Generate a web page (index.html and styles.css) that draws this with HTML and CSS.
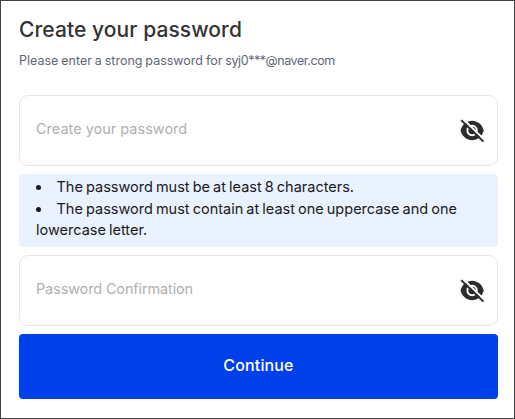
FILE: index.html
```html
<!DOCTYPE html>
<html lang="en">

<head>
    <meta charset="UTF-8">
    <meta name="viewport" content="width=device-width, initial-scale=1.0">
    <title>Create your password</title>
    <link rel="stylesheet" href="styles.css">
</head>

<body>
    <form class="password-form">
        <h1 class="title">Create your password</h1>
        <p class="subtitle">Please enter a strong password for <span class="email">syj0***@naver.com</span></p>

        <div class="field">
            <input class="field-input" type="password" placeholder="Create your password" aria-label="Create your password">
            <svg class="eye-icon" viewBox="0 0 26 26">
                <path class="eye" d="M1.6 13.5C3.2 7.2 8 3.8 13.1 3.8S23.1 7.2 24.7 13.5C23.1 19.8 18.2 23.2 13.1 23.2S3.2 19.8 1.6 13.5z"/>
                <circle class="iris" cx="13.1" cy="13.5" r="4.7"/>
                <path class="gap" d="M3.8 1.8L26 23.4"/>
                <path class="slash" d="M2.2 3.1L24.5 24.6"/>
            </svg>
        </div>

        <ul class="rules">
            <li>The password must be at least 8 characters.</li>
            <li>The password must contain at least one uppercase and one lowercase letter.</li>
        </ul>

        <div class="field">
            <input class="field-input confirm" type="password" placeholder="Password Confirmation" aria-label="Password Confirmation">
            <svg class="eye-icon" viewBox="0 0 26 26">
                <path class="eye" d="M1.6 13.5C3.2 7.2 8 3.8 13.1 3.8S23.1 7.2 24.7 13.5C23.1 19.8 18.2 23.2 13.1 23.2S3.2 19.8 1.6 13.5z"/>
                <circle class="iris" cx="13.1" cy="13.5" r="4.7"/>
                <path class="gap" d="M3.8 1.8L26 23.4"/>
                <path class="slash" d="M2.2 3.1L24.5 24.6"/>
            </svg>
        </div>

        <button class="continue-btn" type="button">Continue</button>
    </form>
</body>

</html>
```

FILE: styles.css
```css
* {
    box-sizing: border-box;
}

body {
    margin: 0;
    height: 100vh;
    border: 1px solid #414042;
    background-color: #fff;
    font-family: Inter, "Liberation Sans", sans-serif;
    overflow: hidden;
}

.password-form {
    padding: 15px 16px 0 18px;
}

.title {
    margin: 0;
    font-size: 21px;
    line-height: 28px;
    font-weight: 500;
    letter-spacing: 0.08px;
    color: #333;
}

.subtitle {
    margin: 7px 0 24px;
    font-size: 12.5px;
    line-height: 20px;
    word-spacing: -0.6px;
    color: #5f6675;
}

.email {
    letter-spacing: -0.42px;
}

.field {
    display: flex;
    align-items: center;
    height: 71px;
    padding: 0 12px 0 16px;
    border: 1px solid #e6e6e6;
    border-radius: 9px;
}

.field-input {
    flex: 1;
    min-width: 0;
    padding: 0 0 4px;
    border: none;
    outline: none;
    background: none;
    font-family: inherit;
    font-size: 14.5px;
}

.field-input::placeholder {
    color: #b0b0b0;
}

.confirm {
    letter-spacing: -0.14px;
}

.eye-icon {
    width: 26px;
    height: 26px;
    margin-bottom: 2px;
    fill: none;
}

.eye {
    fill: #2c2c2c;
}

.iris {
    stroke: #fff;
    stroke-width: 2;
}

.gap {
    stroke: #fff;
    stroke-width: 2;
}

.slash {
    stroke: #2c2c2c;
    stroke-width: 2;
}

.rules {
    margin: 8px 0;
    height: 73px;
    padding: 2px 17px;
    border-radius: 4px;
    background-color: #eaf1ff;
    list-style-position: inside;
    font-size: 14.5px;
    line-height: 21.5px;
    word-spacing: -1px;
    color: #191919;
}

.continue-btn {
    display: block;
    width: 100%;
    height: 65px;
    margin-top: 8px;
    padding: 0 0 4px;
    border: none;
    border-radius: 4px;
    background-color: #0040e8;
    color: #fff;
    font-family: inherit;
    font-size: 16px;
    font-weight: 500;
    letter-spacing: 0.15px;
    cursor: pointer;
}
```
